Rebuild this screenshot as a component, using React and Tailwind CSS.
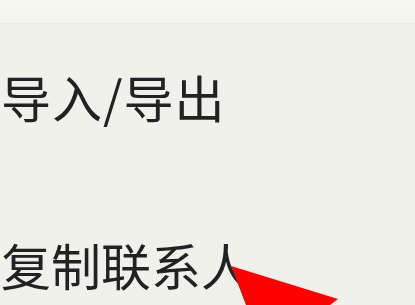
export default function App() {
  return (
    <div
      className="relative w-[415px] h-[305px] overflow-hidden bg-[#f1f1ec] text-[#222222]"
      style={{ fontFamily: '"Noto Sans CJK SC", "Noto Sans", sans-serif' }}
    >
      <div className="h-[24px] bg-gradient-to-b from-[#f8f8f3] to-[#f4f4ef] border-b border-[#ebebe5]" />
      <div className="flex flex-col pl-[1px]">
        <div className="mt-[47px] h-[50px] text-[50px] leading-[50px] tracking-[1px]">导入/导出</div>
        <div className="mt-[118px] h-[50px] text-[50px] leading-[50px]">复制联系人</div>
      </div>
      <svg className="absolute left-0 top-0" width="415" height="305" viewBox="0 0 415 305">
        <polygon points="231,266 338,299 330,305 246,305" fill="#ff0000" />
      </svg>
    </div>
  );
}
